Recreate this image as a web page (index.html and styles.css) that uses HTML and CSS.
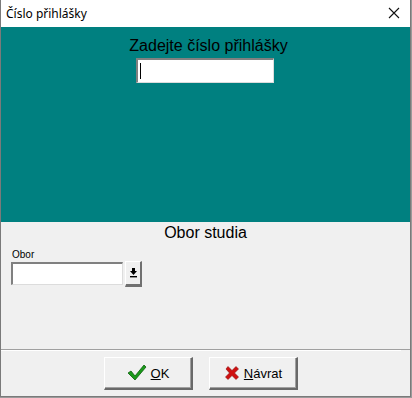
FILE: index.html
```html
<!DOCTYPE html>
<html lang="cs">
<head>
  <meta charset="UTF-8">
  <title>Číslo přihlášky</title>
  <link rel="stylesheet" href="styles.css">
</head>
<body>
  <div class="window">
    <!-- Title bar -->
    <div class="titlebar">
      <span class="title">Číslo přihlášky</span>
      <svg class="close" width="12" height="12" viewBox="0 0 12 12">
        <path d="M1 1 L11 11 M11 1 L1 11" stroke="#111" stroke-width="1.1" fill="none"/>
      </svg>
    </div>

    <!-- Application number -->
    <div class="top-panel">
      <div class="panel-label">Zadejte číslo přihlášky</div>
      <div class="text-input wide"><span class="caret"></span></div>
    </div>

    <!-- Field of study -->
    <div class="study-panel">
      <div class="section-title">Obor studia</div>
      <div class="field-label">Obor</div>
      <div class="combo">
        <div class="text-input narrow"></div>
        <div class="drop-btn">
          <svg width="9" height="10" viewBox="0 0 9 10">
            <path d="M3 0 H6 V3 H8 L4.5 7 L1 3 H3 Z" fill="#000"/>
            <rect x="1" y="8" width="7" height="1.4" fill="#000"/>
          </svg>
        </div>
      </div>
    </div>

    <!-- Buttons -->
    <div class="footer">
      <button class="btn">
        <svg width="20" height="18" viewBox="0 0 20 18">
          <path d="M1 9 L4 7 L8 12 L17 1 L19 3 L8 16 Z" fill="#1a9a1a" stroke="#0b5e0b" stroke-width="0.8"/>
        </svg>
        <span><u>O</u>K</span>
      </button>
      <button class="btn">
        <svg width="16" height="16" viewBox="0 0 16 16">
          <path d="M2 4 L4 1.5 L8 5.5 L12 1.5 L14.5 4 L10.5 8 L14.5 12 L12 14.5 L8 10.5 L4 14.5 L1.5 12 L5.5 8 Z" fill="#d01010" stroke="#8a0a0a" stroke-width="0.6"/>
        </svg>
        <span><u>N</u>ávrat</span>
      </button>
    </div>
  </div>
</body>
</html>
```

FILE: styles.css
```css
/* Global */
body {
  margin: 0;
  padding: 0;
  background-color: #9a9a9a;
  font-family: "Liberation Sans", Arial, sans-serif;
}

.window {
  width: 409px;
  height: 396px;
  background-color: #f0f0f0;
  border-left: 1px solid #7a7a7a;
  border-right: 1px solid #7a7a7a;
  border-bottom: 1px solid #7a7a7a;
  display: flex;
  flex-direction: column;
}

/* Title bar */
.titlebar {
  height: 27px;
  background-color: #fff;
  display: flex;
  align-items: center;
  justify-content: space-between;
  padding: 0 10px 0 5px;
}

.title {
  font-family: "Noto Sans", "Open Sans", sans-serif;
  font-size: 12px;
  color: #000;
  margin-top: -1px;
}

.close {
  margin-top: -1px;
}

/* Teal panel */
.top-panel {
  height: 195px;
  background-color: #008080;
  display: flex;
  flex-direction: column;
  align-items: center;
  padding-top: 9px;
  box-sizing: border-box;
}

.panel-label {
  font-size: 16px;
  color: #000;
  line-height: 20px;
  margin-left: 6px;
}

.text-input {
  background-color: #fff;
  border-top: 2px solid #808080;
  border-left: 2px solid #808080;
  border-right: 1px solid #dcdcdc;
  border-bottom: 1px solid #dcdcdc;
  box-sizing: border-box;
  height: 25px;
}

.wide {
  width: 138px;
  margin-top: 2px;
  margin-right: 1px;
  padding: 3px 0 0 2px;
}

.caret {
  display: block;
  width: 1px;
  height: 16px;
  background-color: #000;
}

/* Study panel */
.study-panel {
  height: 128px;
  padding: 1px 0 0 10px;
  box-sizing: border-box;
  border-bottom: 1px solid #a0a0a0;
}

.section-title {
  font-size: 16px;
  text-align: center;
  line-height: 20px;
  margin-right: 10px;
}

.field-label {
  font-size: 10px;
  margin-top: 6px;
  line-height: 12px;
  padding-left: 1px;
}

.combo {
  display: flex;
  align-items: flex-start;
  gap: 2px;
  margin-top: 1px;
}

.narrow {
  width: 112px;
  height: 23px;
}

.drop-btn {
  width: 17px;
  height: 26px;
  margin-top: -1px;
  box-sizing: border-box;
  background-color: #f0f0f0;
  border-top: 1px solid #fff;
  border-left: 1px solid #fff;
  border-right: 2px solid #707070;
  border-bottom: 3px solid #707070;
  display: flex;
  align-items: center;
  justify-content: center;
  padding-left: 1px;
}

/* Footer */
.footer {
  flex: 1;
  border-top: 1px solid #fff;
  display: flex;
  justify-content: center;
  gap: 16px;
  padding-top: 6px;
  box-sizing: border-box;
  margin-right: 9px;
}

.btn {
  width: 89px;
  height: 33px;
  background-color: #f0f0f0;
  border-top: 1px solid #fff;
  border-left: 1px solid #fff;
  border-right: 2px solid #696969;
  border-bottom: 2px solid #696969;
  box-shadow: inset -1px -1px 0 #a0a0a0;
  display: flex;
  align-items: center;
  justify-content: center;
  gap: 4px;
  font-family: "Liberation Sans", Arial, sans-serif;
  font-size: 13px;
  color: #000;
  padding: 0;
}
```
